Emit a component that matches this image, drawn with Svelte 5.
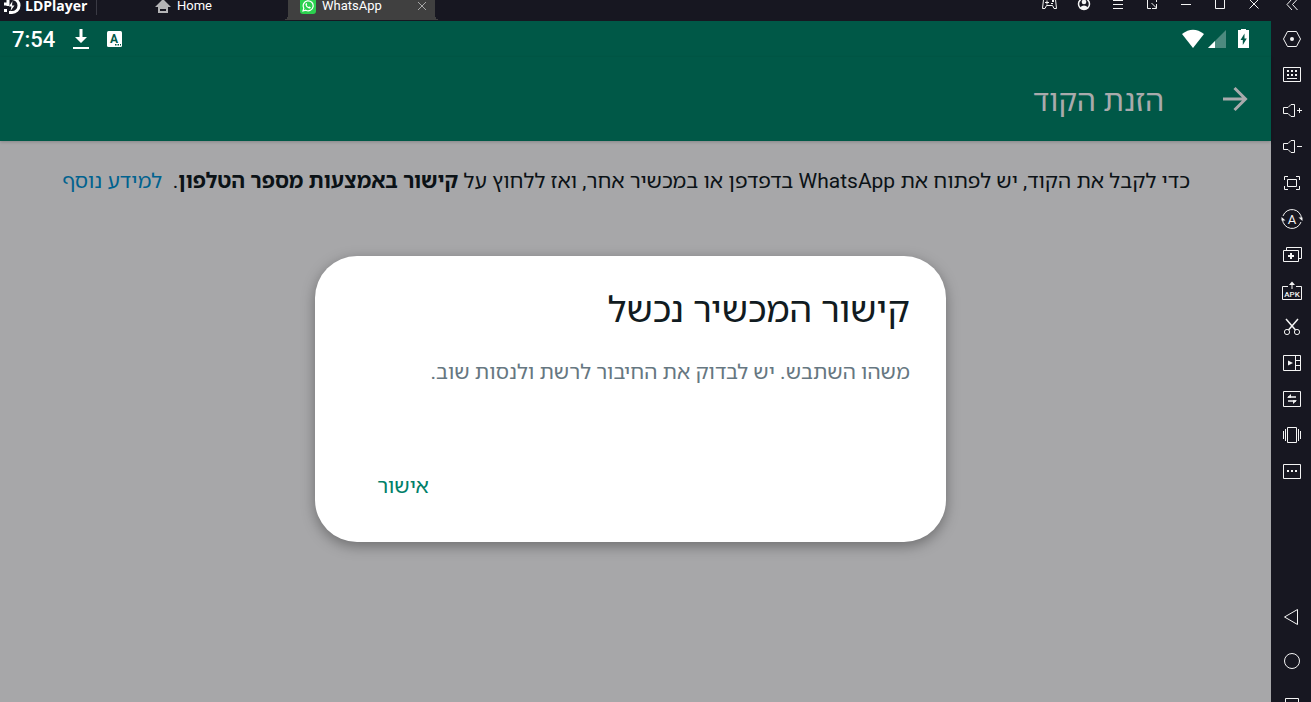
<script>
	const windowControls = [
		{
			label: 'Gamepad',
			icon: '<path d="M3.5 6.5h12l1 9h-2.500l-1.500-3h-6l-1.500 3H2.500zM5 9.500h4M7 7.500v4"/><path class="fill" d="M12 7h2v2h-2zM11 10h2v1h-2z"/>'
		},
		{
			label: 'Account',
			icon: '<circle cx="10" cy="11" r="5.5" stroke-width="1.5"/><circle class="fill" cx="10" cy="9" r="2.3"/><path class="fill" d="M6 14.5q4-4 8 0-4 4-8 0z"/>'
		},
		{ label: 'Menu', icon: '<path d="M5 7.5h10M5 11.5h10M5 15.5h10"/>' },
		{ label: 'Shrink', icon: '<path d="M9 15.5H5.5v-10h9V9M9.5 10l5 5M14.5 11v4.5H10"/>' },
		{ label: 'Minimize', icon: '<path d="M5 11.5h10"/>' },
		{ label: 'Maximize', icon: '<path d="M5.5 6.5h9v9h-9z"/>' },
		{ label: 'Close', icon: '<path d="m5.5 6.500 9 9M14.5 6.500l-9 9"/>' }
	];

	const tools = [
		{
			label: 'Settings',
			icon: '<path d="M3.5 11l4-7.5h9l4 7.5-4 7.5h-9z"/><circle class="fill" cx="12" cy="11" r="2"/>'
		},
		{
			label: 'Keyboard mapping',
			icon: '<path d="M3.5 3.5h17v14h-17zM7 14.5h10"/><path class="fill" d="M7 6h2v2H7zM11 6h2v2h-2zM15 6h2v2h-2zM7 10h2v2H7zM11 10h2v2h-2zM15 10h2v2h-2z"/>'
		},
		{
			label: 'Volume up',
			icon: '<path d="M3.5 7.5H8l3-3h3.5v12H11l-3-3H3.5zM17 10.5h5M19.5 8v5"/>'
		},
		{
			label: 'Volume down',
			icon: '<path d="M3.5 7.5H8l3-3h3.5v12H11l-3-3H3.5zM17 10.5h5"/>'
		},
		{
			label: 'Full screen',
			icon: '<path d="M4.5 8V4.5H8M16 4.5h3.5V8M19.5 14v3.5H16M8 17.5H4.5V14M7.5 7.5h9v7h-9z"/>'
		},
		{
			label: 'Rotate',
			icon: '<path d="M3 8a9.5 9.5 0 0 1 18.5 3M21 14a9.5 9.5 0 0 1-18.5-3"/><path class="fill" d="M18.5 9.5h4V13zM5.500 12.500h-4V9z"/><text x="12" y="15.500" font-size="13">A</text>'
		},
		{
			label: 'Multi instance',
			icon: '<path d="M3.5 6.5h15v11h-15zM6.5 6V3.5h15v11H19"/><path d="M8 12h6M11 9v6" stroke-width="2"/>'
		},
		{
			label: 'Install APK',
			icon: '<path d="M8 6.5H2.5v13h19v-13H16M12 9V4"/><path class="fill" d="m12 1.5 3 3.500H9z"/><text x="12" y="17" font-size="8" font-weight="500">APK</text>'
		},
		{
			label: 'Screenshot',
			icon: '<circle cx="7" cy="16" r="2.6"/><circle cx="17" cy="16" r="2.6"/><path d="m6 3 9.5 11M18 3 8.500 14" stroke-width="1.5"/>'
		},
		{
			label: 'Record',
			icon: '<path d="M3.5 3.5h17v15h-17zM15.5 3.5v15M15.5 8.5h5M15.5 13.5h5"/><path class="fill" d="m8 8.5 5 2.500-5 2.500z"/>'
		},
		{
			label: 'Shared folder',
			icon: '<path d="M3.5 3.5h17v15h-17z"/><path d="M8 9h8M8 13h8" stroke-width="1.6"/><path class="fill" d="M7 9.8 11 6v3.800zM17 12.200 13 16v-3.800z"/>'
		},
		{
			label: 'Shake',
			icon: '<path d="M7.5 3.5h9v15h-9zM5.5 5v12M3.5 7v8M18.5 5v12M20.5 7v8"/>'
		},
		{
			label: 'More',
			icon: '<path d="M3.5 4.5h17v14h-17z"/><path class="fill" d="M7 10h2v2H7zM11 10h2v2h-2zM15 10h2v2h-2z"/>'
		}
	];

	const navigation = [
		{ label: 'Back', icon: '<path d="M17.5 3.5v15L4.5 11z"/>' },
		{ label: 'Home screen', icon: '<circle cx="12" cy="11" r="7.5"/>' },
		{ label: 'Recent apps', icon: '<path d="M5.5 4.5h13v13h-13z"/>' }
	];

	let dialogOpen = $state(true);
</script>

<div class="emulator">
	<header class="titlebar">
		<div class="brand">
			<svg width="18" height="18" viewBox="0 0 18 18" aria-hidden="true">
				<path
					d="M5 1.5h4a7 7 0 0 1 0 14H6M1 7h4M1 13.5h3M5 1.5V9"
					fill="none"
					stroke="#fff"
					stroke-width="3"
				/>
				<path d="M9.5 4 6 9.5h2.5L7.5 14l4-5.5H9z" fill="#fff" />
			</svg>
			<span>LDPlayer</span>
		</div>
		<button class="tab home-tab">
			<svg width="16" height="16" viewBox="0 0 16 16" aria-hidden="true">
				<path d="M8 1 0 9h3v6h10V9h3zM5 11h6v2H5z" fill="#b4b4b6" fill-rule="evenodd" />
			</svg>
			Home
		</button>
		<div class="tab active-tab">
			<svg width="16" height="16" viewBox="0 0 16 16" aria-hidden="true">
				<rect width="16" height="16" rx="3" fill="#2bd14f" />
				<path
					d="m3 13 .8-2.800A5 5 0 1 1 5.800 12.200z"
					fill="none"
					stroke="#fff"
					stroke-width="1.2"
				/>
				<path
					d="M6 5.2c.8-.4 1 .8 1.2 1.3l-.5.8c.4.8 1 1.3 1.8 1.7l.8-.6 1.5.8c-.2 1.2-1.2 1.5-2.3 1C6.8 9.500 5.500 8 5.400 6.500z"
					fill="#fff"
				/>
			</svg>
			<span class="tab-name">WhatsApp</span>
			<button class="tab-close" aria-label="Close tab">
				<svg width="10" height="10" viewBox="0 0 10 10">
					<path d="m1 1 8 8M9 1 1 9" stroke="#a8a8a8" />
				</svg>
			</button>
		</div>
		<div class="window-controls">
			{#each windowControls as control}
				<button aria-label={control.label}>
					<svg class="line-icon" width="20" height="22" viewBox="0 2 20 22">{@html control.icon}</svg>
				</button>
			{/each}
			<button class="collapse" aria-label="Collapse toolbar">
				<svg class="line-icon" width="20" height="22" viewBox="0 2 20 22">
					<path d="m10 6-5 5.5 5 5.500M15.500 6l-5 5.500 5 5.500" />
				</svg>
			</button>
		</div>
	</header>

	<div class="workspace">
		<div class="screen">
			<div class="status-bar">
				<span class="clock">7:54</span>
				<svg width="16" height="20" viewBox="0 0 16 20" aria-hidden="true">
					<path d="M6.5 0h3v8H14l-6 6-6-6h4.5zM0 18h16v2H0z" fill="#fff" />
				</svg>
				<svg class="keyboard-badge" width="15" height="16" viewBox="0 0 15 16" aria-hidden="true">
					<rect width="15" height="16" rx="1.5" fill="#fff" />
					<text x="7" y="12" font-size="12" font-weight="700" text-anchor="middle" fill="#005847">A</text>
					<path d="M8 13h1.500v1.500H8zM10.500 13H12v1.500h-1.500zM13 13h1v1.500h-1z" fill="#005847" />
				</svg>
				<div class="signals">
					<svg width="24" height="20" viewBox="0 0 24 20" aria-hidden="true">
						<path d="M1 5Q12-3.500 23 5L12 19z" fill="#fff" />
					</svg>
					<svg width="18" height="18" viewBox="0 0 18 18" aria-hidden="true">
						<path d="M18 0v18H0z" fill="#4d8a7f" />
						<path d="M7 11v7H0z" fill="#fff" />
					</svg>
					<svg class="battery" width="11" height="20" viewBox="0 0 11 20" aria-hidden="true">
						<path d="M3 0h5v1h3v18H0V1h3z" fill="#fff" />
						<path d="M6.500 4.500 2.500 11h2.300v5l4-6.500H6.500z" fill="#005847" />
					</svg>
				</div>
			</div>

			<div class="app-bar" dir="rtl">
				<button class="back" aria-label="חזרה">
					<svg width="26" height="26" viewBox="0 0 26 26">
						<path d="M1 13h22M12.5 2l11 11-11 11" fill="none" stroke="#a9aaac" stroke-width="3" />
					</svg>
				</button>
				<h1>הזנת הקוד</h1>
			</div>

			<main class="content" dir="rtl">
				<p>
					כדי לקבל את הקוד, יש לפתוח את WhatsApp בדפדפן או במכשיר אחר, ואז ללחוץ על
					<b>קישור באמצעות מספר הטלפון</b>.&nbsp;
					<a href="#learn-more">למידע נוסף</a>
				</p>
			</main>

			{#if dialogOpen}
				<div class="overlay">
					<div class="dialog" role="alertdialog" aria-labelledby="dialog-title" dir="rtl">
						<h2 id="dialog-title">קישור המכשיר נכשל</h2>
						<p>משהו השתבש. יש לבדוק את החיבור לרשת ולנסות שוב.</p>
						<div class="actions">
							<button onclick={() => (dialogOpen = false)}>אישור</button>
						</div>
					</div>
				</div>
			{/if}
		</div>

		<aside class="toolbar">
			{#each tools as tool}
				<button aria-label={tool.label}>
					<svg class="line-icon" width="24" height="22" viewBox="0 0 24 22">{@html tool.icon}</svg>
				</button>
			{/each}
			<nav>
				{#each navigation as item}
					<button aria-label={item.label}>
						<svg class="line-icon" width="24" height="22" viewBox="0 0 24 22">{@html item.icon}</svg>
					</button>
				{/each}
			</nav>
		</aside>
	</div>
</div>

<style>
	:global(body) {
		margin: 0;
		background: #171721;
		font-family: Roboto, 'Noto Sans Hebrew', 'Open Sans', sans-serif;
	}

	button {
		display: flex;
		align-items: center;
		justify-content: center;
		box-sizing: border-box;
		padding: 0;
		border: none;
		background: none;
		color: inherit;
		font: inherit;
		cursor: pointer;
	}

	svg {
		display: block;
		flex: none;
	}

	.line-icon {
		fill: none;
		stroke: #f4f4f4;
	}

	.line-icon :global(.fill),
	.line-icon :global(text) {
		fill: #f4f4f4;
		stroke: none;
		text-anchor: middle;
	}

	.emulator {
		display: flex;
		flex-direction: column;
		height: 100vh;
		overflow: hidden;
	}

	/* title bar */
	.titlebar {
		display: flex;
		align-items: center;
		box-sizing: border-box;
		height: 21px;
		padding-bottom: 9px;
		overflow: hidden;
		flex: none;
		color: #fff;
		font-size: 13px;
		line-height: 20px;
	}

	.brand {
		display: flex;
		align-items: center;
		gap: 4px;
		box-sizing: border-box;
		width: 97px;
		padding-left: 3px;
		border-right: 1px solid #3a3a44;
		font-family: 'Open Sans', sans-serif;
		font-size: 14px;
		font-weight: 700;
		line-height: 16px;
	}

	.tab {
		display: flex;
		align-items: center;
		gap: 6px;
	}

	.home-tab {
		justify-content: flex-start;
		width: 191px;
		padding-left: 58px;
	}

	.active-tab {
		position: relative;
		box-sizing: border-box;
		width: 147px;
		height: 28px;
		padding: 0 8px 0 12px;
		background: #404040;
	}

	/* flared foot of the selected tab */
	.active-tab::before,
	.active-tab::after {
		content: '';
		position: absolute;
		bottom: 0;
		width: 5px;
		height: 5px;
	}

	.active-tab::before {
		right: 100%;
		background: radial-gradient(circle at 0 0, transparent 5px, #404040 5px);
	}

	.active-tab::after {
		left: 100%;
		background: radial-gradient(circle at 100% 0, transparent 5px, #404040 5px);
	}

	.tab-name {
		flex: 1;
	}

	.window-controls {
		display: flex;
		margin-left: auto;
	}

	.window-controls button {
		width: 34px;
	}

	.window-controls .collapse {
		width: 40px;
		padding-left: 2px;
	}

	/* device screen */
	.workspace {
		display: flex;
		flex: 1;
		min-height: 0;
	}

	.screen {
		position: relative;
		flex: 1;
		background: #a7a7a9;
	}

	.status-bar {
		display: flex;
		align-items: center;
		height: 36px;
		padding: 0 22px 0 12px;
		background: #005847;
		color: #fff;
	}

	.clock {
		margin-right: 18px;
		font-size: 22px;
		font-weight: 500;
	}

	.keyboard-badge {
		margin-left: 18px;
	}

	.signals {
		display: flex;
		align-items: center;
		gap: 3px;
		margin-left: auto;
	}

	.battery {
		margin-left: 9px;
	}

	.app-bar {
		display: flex;
		align-items: center;
		gap: 58px;
		height: 84px;
		padding: 0 23px;
		background: #005847;
		box-shadow: 0 1px 3px rgba(0, 0, 0, 0.2);
		color: #a9aaac;
	}

	h1 {
		margin: 0;
		font-size: 30px;
		font-weight: 400;
	}

	.content {
		padding: 24px 81px 24px 60px;
		color: #0b1216;
		font-size: 21px;
		line-height: 32px;
	}

	.content p {
		margin: 0;
	}

	.content a {
		color: #00628f;
		text-decoration: none;
	}

	/* dialog */
	.overlay {
		position: absolute;
		inset: 0;
		display: flex;
		align-items: center;
		justify-content: center;
		padding: 74px 10px 0 0;
	}

	.dialog {
		box-sizing: border-box;
		width: 50%;
		padding: 32px 36px;
		border-radius: 42px;
		background: #fff;
		box-shadow: 0 4px 14px rgba(0, 0, 0, 0.35);
	}

	.dialog h2 {
		margin: 0;
		color: #111b21;
		font-size: 36px;
		font-weight: 400;
		line-height: 44px;
	}

	.dialog p {
		margin: 24px 0 72px;
		color: #667781;
		font-size: 21px;
		line-height: 32px;
	}

	.actions {
		display: flex;
		justify-content: flex-end;
		padding: 0 26px;
	}

	.actions button {
		height: 50px;
		color: #008069;
		font-size: 21px;
	}

	/* side toolbar */
	.toolbar {
		display: flex;
		flex-direction: column;
		flex: none;
		width: 40px;
		overflow: hidden;
	}

	.toolbar button {
		width: 40px;
		height: 36px;
		padding-left: 2px;
		flex: none;
	}

	.toolbar nav {
		margin: auto 0 -25px;
	}

	.toolbar nav button {
		height: 44px;
	}
</style>
